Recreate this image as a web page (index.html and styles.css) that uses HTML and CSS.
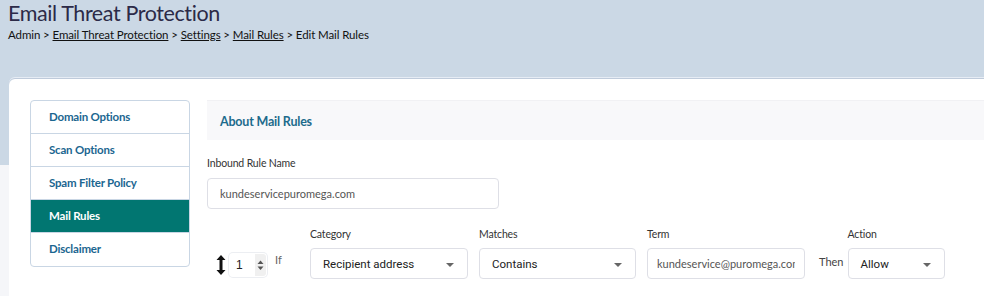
FILE: index.html
```html
<!DOCTYPE html>
<html lang="en">
<head>
    <meta charset="UTF-8">
    <title>Edit Mail Rules</title>
    <link rel="stylesheet" href="styles.css">
</head>
<body>
    <div class="page">
        <header class="page-header">
            <h1>Email Threat Protection</h1>
            <div class="breadcrumb">
                Admin &gt; <a href="#">Email Threat Protection</a> &gt; <a href="#">Settings</a> &gt; <a href="#">Mail Rules</a> &gt; Edit Mail Rules
            </div>
        </header>

        <div class="card">
            <ul class="side-nav">
                <li><a href="#">Domain Options</a></li>
                <li><a href="#">Scan Options</a></li>
                <li><a href="#">Spam Filter Policy</a></li>
                <li class="active"><a href="#">Mail Rules</a></li>
                <li><a href="#">Disclaimer</a></li>
            </ul>

            <div class="content">
                <div class="panel-title">About Mail Rules</div>

                <div class="form-group">
                    <label>Inbound Rule Name</label>
                    <input type="text" class="text-input rule-name" value="kundeservicepuromega.com">
                </div>

                <div class="rule-row">
                    <div class="order">
                        <svg class="drag" width="12" height="24" viewBox="0 0 12 24">
                            <path d="M6 2 L1.5 7 H4.5 V17 H1.5 L6 22 L10.5 17 H7.5 V7 H10.5 Z" fill="#111"/>
                        </svg>
                        <div class="spinner">
                            <span>1</span>
                            <span class="spin-btns">
                                <svg width="7" height="12" viewBox="0 0 7 12">
                                    <path d="M0.5 5 L3.5 1.5 L6.5 5 Z" fill="#555"/>
                                    <path d="M0.5 7.5 L3.5 11 L6.5 7.5 Z" fill="#555"/>
                                </svg>
                            </span>
                        </div>
                        <span class="word">If</span>
                    </div>

                    <div class="field cat">
                        <label>Category</label>
                        <div class="select">Recipient address<i class="caret"></i></div>
                    </div>
                    <div class="field match">
                        <label>Matches</label>
                        <div class="select">Contains<i class="caret"></i></div>
                    </div>
                    <div class="field term">
                        <label>Term</label>
                        <input type="text" class="text-input term-input" value="kundeservice@puromega.com">
                    </div>
                    <span class="word then">Then</span>
                    <div class="field action">
                        <label>Action</label>
                        <div class="select">Allow<i class="caret"></i></div>
                    </div>
                </div>
            </div>
        </div>
    </div>
</body>
</html>
```

FILE: styles.css
```css
* {
    box-sizing: border-box;
    margin: 0;
    padding: 0;
}

body {
    font-family: 'Lato', 'Open Sans', sans-serif;
    color: #222;
    overflow: hidden;
}

.page {
    min-height: 296px;
    background: linear-gradient(#cbd8e5 0, #cbd8e5 165px, #f5f6f9 165px);
}

.page-header {
    height: 79px;
    padding: 0 8px;
}

h1 {
    font-size: 21.5px;
    font-weight: 400;
    letter-spacing: -0.4px;
    line-height: 26px;
    color: #2c2a48;
}

.breadcrumb {
    font-size: 11.5px;
    letter-spacing: -0.1px;
    line-height: 15px;
    color: #111;
    margin-top: 1px;
}

.breadcrumb a {
    color: #111;
}

.card {
    margin-left: 9px;
    height: 217px;
    background: #fff;
    border-radius: 6px 0 0 0;
    box-shadow: 0 -1px 0 #bfcbdb, 0 -2px 0 #e6ecf4;
    padding: 21px 0 0 21px;
    display: flex;
    gap: 17px;
}

.side-nav {
    list-style: none;
    width: 160px;
    height: 167px;
    border: 1px solid #c9d6e4;
    border-radius: 4px;
    overflow: hidden;
    flex-shrink: 0;
}

.side-nav li {
    height: 33px;
    border-bottom: 1px solid #c9d6e4;
}

.side-nav li:last-child {
    border-bottom: none;
}

.side-nav a {
    display: block;
    padding-left: 18px;
    line-height: 32px;
    font-size: 11.5px;
    letter-spacing: -0.2px;
    font-weight: 700;
    color: #1b6690;
    text-decoration: none;
}

.side-nav li.active {
    background: #017671;
}

.side-nav li.active a {
    color: #fff;
}

.content {
    flex: 1;
}

.panel-title {
    height: 40px;
    background: #f8f8fa;
    border-top: 1px solid #f1f1f4;
    padding-left: 13px;
    line-height: 41px;
    font-size: 12.5px;
    letter-spacing: -0.2px;
    font-weight: 700;
    color: #1d6b8c;
}

.form-group {
    margin-top: 16px;
}

label {
    display: block;
    font-size: 10.5px;
    letter-spacing: -0.15px;
    line-height: 14px;
    color: #333;
    margin-bottom: 8px;
}

.text-input {
    display: block;
    height: 31px;
    border: 1px solid #dedfe6;
    border-radius: 4px;
    padding: 0 12px;
    font-family: 'Lato', sans-serif;
    font-size: 11px;
    color: #555;
    background: #fff;
    outline: none;
}

.rule-name {
    width: 292px;
}

.rule-row {
    display: flex;
    align-items: flex-end;
    margin-top: 18px;
}

.order {
    display: flex;
    align-items: center;
    height: 31px;
    padding-left: 8px;
    width: 103px;
}

.drag {
    margin-top: 2px;
}

.spinner {
    width: 38px;
    height: 24px;
    margin-left: 2px;
    margin-top: 2px;
    border-radius: 4px;
    background: #fff;
    box-shadow: 0 0 0 1px #eceef2;
    display: flex;
    align-items: center;
    justify-content: space-between;
    padding-left: 7px;
    font-family: 'Liberation Sans', sans-serif;
    font-size: 12px;
    color: #222;
}

.spin-btns {
    width: 11px;
    height: 22px;
    background: #f0f0f0;
    display: flex;
    align-items: center;
    justify-content: center;
    margin-right: 1px;
    border-radius: 0 3px 3px 0;
}

.word {
    font-size: 11px;
    color: #666;
    margin-left: 8px;
    margin-top: -9px;
}

.field label {
    margin-bottom: 7px;
}

.select {
    position: relative;
    height: 31px;
    border: 1px solid #dedfe6;
    border-radius: 4px;
    padding-left: 12px;
    line-height: 30px;
    font-family: 'Roboto', 'Liberation Sans', sans-serif;
    font-size: 11.5px;
    color: #222;
}

.caret {
    position: absolute;
    right: 13px;
    top: 14px;
    border-left: 4px solid transparent;
    border-right: 4px solid transparent;
    border-top: 4px solid #666;
}

.cat {
    width: 158px;
}

.match {
    width: 157px;
    margin-left: 11px;
}

.term {
    width: 158px;
    margin-left: 11px;
}

.term-input {
    width: 100%;
    padding: 0 9px;
}

.then {
    margin-left: 14px;
    margin-right: 4px;
    margin-bottom: 11px;
    margin-top: 0;
    color: #444;
}

.action {
    width: 97px;
}
```
